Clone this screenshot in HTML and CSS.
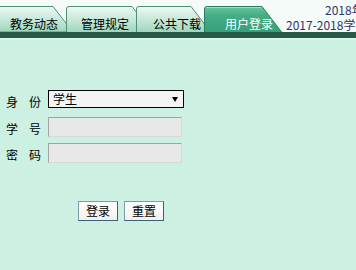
FILE: index.html
```html
<!DOCTYPE html>
<html lang="zh-CN">
<head>
<meta charset="utf-8">
<title>用户登录</title>
<link rel="stylesheet" href="styles.css">
</head>
<body>
<div class="header">
  <div class="tabs">
    <div class="tab t1">
      <svg class="shape" width="73" height="26" viewBox="0 0 73 26"><defs><linearGradient id="g1" x1="0" y1="0" x2="0" y2="1"><stop offset="0" stop-color="#eefaf4"/><stop offset="1" stop-color="#9fd6bd"/></linearGradient></defs><path d="M-1,26 V0.5 H53 L73,26 Z" fill="url(#g1)" stroke="#4f8f76" stroke-width="1"/></svg>
      <span class="label-t">教务动态</span>
    </div>
    <div class="tab t2">
      <svg class="shape" width="86" height="26" viewBox="0 0 86 26"><defs><linearGradient id="g2" x1="0" y1="0" x2="0" y2="1"><stop offset="0" stop-color="#eefaf4"/><stop offset="1" stop-color="#9fd6bd"/></linearGradient></defs><path d="M0.5,26.5 V3 Q0.5,0.5 3,0.5 H66 L86,26.5 Z" fill="url(#g2)" stroke="#4f8f76" stroke-width="1"/></svg>
      <span class="label-t">管理规定</span>
    </div>
    <div class="tab t3">
      <svg class="shape" width="75" height="26" viewBox="0 0 75 26"><defs><linearGradient id="g3" x1="0" y1="0" x2="0" y2="1"><stop offset="0" stop-color="#eefaf4"/><stop offset="1" stop-color="#9fd6bd"/></linearGradient></defs><path d="M0.5,26.5 V3 Q0.5,0.5 3,0.5 H55 L75,26.5 Z" fill="url(#g3)" stroke="#4f8f76" stroke-width="1"/></svg>
      <span class="label-t">公共下载</span>
    </div>
    <div class="tab t4 active">
      <svg class="shape" width="78" height="26" viewBox="0 0 78 26"><defs><linearGradient id="g4" x1="0" y1="0" x2="0" y2="1"><stop offset="0" stop-color="#66c59e"/><stop offset="0.35" stop-color="#45ad86"/><stop offset="1" stop-color="#36a079"/></linearGradient></defs><path d="M0.5,26.5 V3 Q0.5,0.5 3,0.5 H58 L78,26.5 Z" fill="url(#g4)" stroke="#2e7d5f" stroke-width="1"/><path d="M2,1.5 H57.5" stroke="#a8dcc6" stroke-width="1"/></svg>
      <span class="label-t">用户登录</span>
    </div>
  </div>
  <div class="info">
    <div class="line l1">2018年</div>
    <div class="line l2">2017-2018学</div>
  </div>
</div>
<div class="bar"></div>

<div class="form">
  <div class="row r1">
    <div class="label"><span>身</span><span>份</span></div>
    <div class="select"><span>学生</span><span class="arrow"></span></div>
  </div>
  <div class="row r2">
    <div class="label"><span>学</span><span>号</span></div>
    <input class="field" type="text">
  </div>
  <div class="row r3">
    <div class="label"><span>密</span><span>码</span></div>
    <input class="field" type="password">
  </div>
  <div class="buttons">
    <button class="btn" type="button">登录</button>
    <button class="btn" type="button">重置</button>
  </div>
</div>
</body>
</html>
```

FILE: styles.css
```css
html, body {
  margin: 0;
  padding: 0;
}
body {
  background: #ccf0e1;
  font-family: "Noto Sans CJK SC", "Noto Sans", sans-serif;
  font-size: 12px;
  color: #000;
  width: 356px;
  height: 270px;
  overflow: hidden;
}
.header {
  display: flex;
  height: 32px;
  background: #f4fbf8;
}
.tabs {
  display: flex;
  padding-top: 6px;
  flex: none;
}
.tab {
  position: relative;
  height: 26px;
  flex: none;
}
.shape {
  position: absolute;
  left: 0;
  top: 0;
  display: block;
}
.label-t {
  position: relative;
  display: block;
  padding-top: 11px;
  line-height: 14px;
  white-space: nowrap;
}
.t1 { width: 73px; }
.t1 .label-t { padding-left: 10px; }
.t2 { width: 86px; margin-left: -7px; }
.t2 .label-t { padding-left: 15px; }
.t3 { width: 75px; margin-left: -16px; }
.t3 .label-t { padding-left: 17px; }
.t4 { width: 78px; margin-left: -7px; }
.t4 .label-t { padding-left: 21px; color: #fff; }
.info {
  flex: 1;
  min-width: 0;
  white-space: nowrap;
  margin-left: 4px;
  padding-top: 2px;
  color: #333366;
  font-size: 12px;
  line-height: 15px;
}
.l1 { padding-left: 39px; }
.bar {
  height: 6px;
  background: #265b46;
  border-bottom: 2px solid #def4ea;
}
.form {
  padding-top: 50px;
}
.row {
  display: flex;
  align-items: flex-start;
}
.r2 { margin-top: 8px; }
.r3 { margin-top: 6px; }
.label {
  box-sizing: border-box;
  width: 48px;
  padding-left: 6px;
  padding-top: 5px;
  line-height: 14px;
  display: flex;
  gap: 11px;
  white-space: nowrap;
  flex: none;
}
.select {
  box-sizing: border-box;
  width: 136px;
  height: 18px;
  border: 1px solid #000;
  background: #f4f4f4;
  display: flex;
  align-items: center;
  justify-content: space-between;
  padding: 0 5px 0 4px;
  line-height: 16px;
}
.arrow {
  width: 0;
  height: 0;
  border-left: 3px solid transparent;
  border-right: 3px solid transparent;
  border-top: 5px solid #000;
}
.field {
  box-sizing: border-box;
  width: 134px;
  height: 20px;
  margin: 0;
  padding: 0 2px;
  border: 1px solid;
  border-color: #a2a2a2 #d8d8d8 #d8d8d8 #a2a2a2;
  background: #e8e8e8;
  font: inherit;
  outline: none;
}
.buttons {
  display: flex;
  gap: 6px;
  margin-top: 38px;
  padding-left: 78px;
}
.btn {
  box-sizing: border-box;
  width: 40px;
  height: 20px;
  margin: 0;
  padding: 0;
  border: 1px solid;
  border-color: #7c9ca9 #3b6172 #3b6172 #7c9ca9;
  background: linear-gradient(#ffffff, #f1f1f1);
  font-family: "Noto Sans CJK SC", "Noto Sans", sans-serif;
  font-size: 12px;
  line-height: 16px;
  color: #000;
}
```
